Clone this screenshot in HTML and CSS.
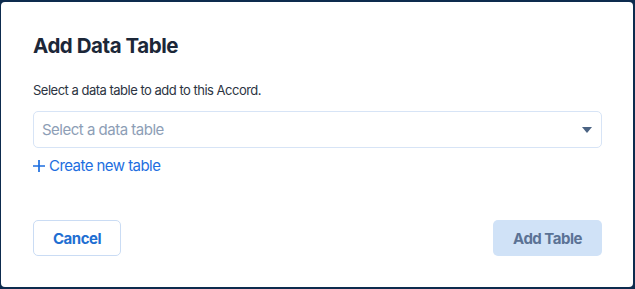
FILE: index.html
```html
<!DOCTYPE html>
<html lang="en">
<head>
<meta charset="utf-8">
<title>Add Data Table</title>
<link rel="stylesheet" href="styles.css">
</head>
<body>
<div class="modal">
  <h2 class="title">Add Data Table</h2>
  <p class="desc">Select a data table to add to this Accord.</p>
  <div class="select">
    <span class="placeholder">Select a data table</span>
    <svg class="caret" width="10" height="6" viewBox="0 0 10 6"><path d="M0 0H10L5 6Z" fill="#4b6383"/></svg>
  </div>
  <a class="create" href="#">
    <svg class="plus" width="12" height="12" viewBox="0 0 12 12"><path d="M6 0V12M0 6H12" stroke="#1d6ee0" stroke-width="1.7"/></svg>
    <span>Create new table</span>
  </a>
  <div class="actions">
    <button class="btn btn-secondary">Cancel</button>
    <button class="btn btn-primary" disabled>Add Table</button>
  </div>
</div>
</body>
</html>
```

FILE: styles.css
```css
* { box-sizing: border-box; }
html, body { margin: 0; height: 100%; }
body {
  background: #0d2b4e;
  padding: 2px 2px 2px 1px;
  font-family: Inter, "Noto Sans", sans-serif;
}
.modal {
  background: #fff;
  border-radius: 4px;
  height: 100%;
  padding: 32px 31px 0 32px;
  display: flex;
  flex-direction: column;
}
.title {
  margin: 0;
  font-size: 20.5px;
  line-height: 24px;
  font-weight: 700;
  color: #1c2738;
  letter-spacing: -0.45px;
}
.desc {
  margin: 24px 0 0;
  font-size: 13px;
  line-height: 16px;
  color: #2c3442;
  letter-spacing: -0.5px;
}
.select {
  margin-top: 13px;
  height: 37px;
  border: 1.5px solid #d7e4f6;
  border-radius: 5px;
  display: flex;
  align-items: center;
  justify-content: space-between;
  padding: 0 9px 0 8px;
}
.placeholder {
  font-size: 15px;
  color: #8d9eb6;
  letter-spacing: -0.5px;
}
.caret { display: block; }
.create {
  margin-top: 8px;
  display: flex;
  align-items: center;
  gap: 4px;
  font-size: 15px;
  line-height: 20px;
  color: #1d6ee0;
  text-decoration: none;
  align-self: flex-start;
  letter-spacing: -0.55px;
}
.plus { display: block; }
.actions {
  margin-top: 44px;
  display: flex;
  justify-content: space-between;
}
.btn {
  height: 36px;
  border-radius: 5px;
  font-family: inherit;
  font-size: 15px;
  font-weight: 700;
  padding: 0;
  letter-spacing: -0.5px;
}
.btn-secondary {
  width: 88px;
  background: #fff;
  border: 1.5px solid #cadcf4;
  color: #1f6fd2;
}
.btn-primary {
  width: 109px;
  background: #d0e2f7;
  border: none;
  color: #5b7295;
}
```
